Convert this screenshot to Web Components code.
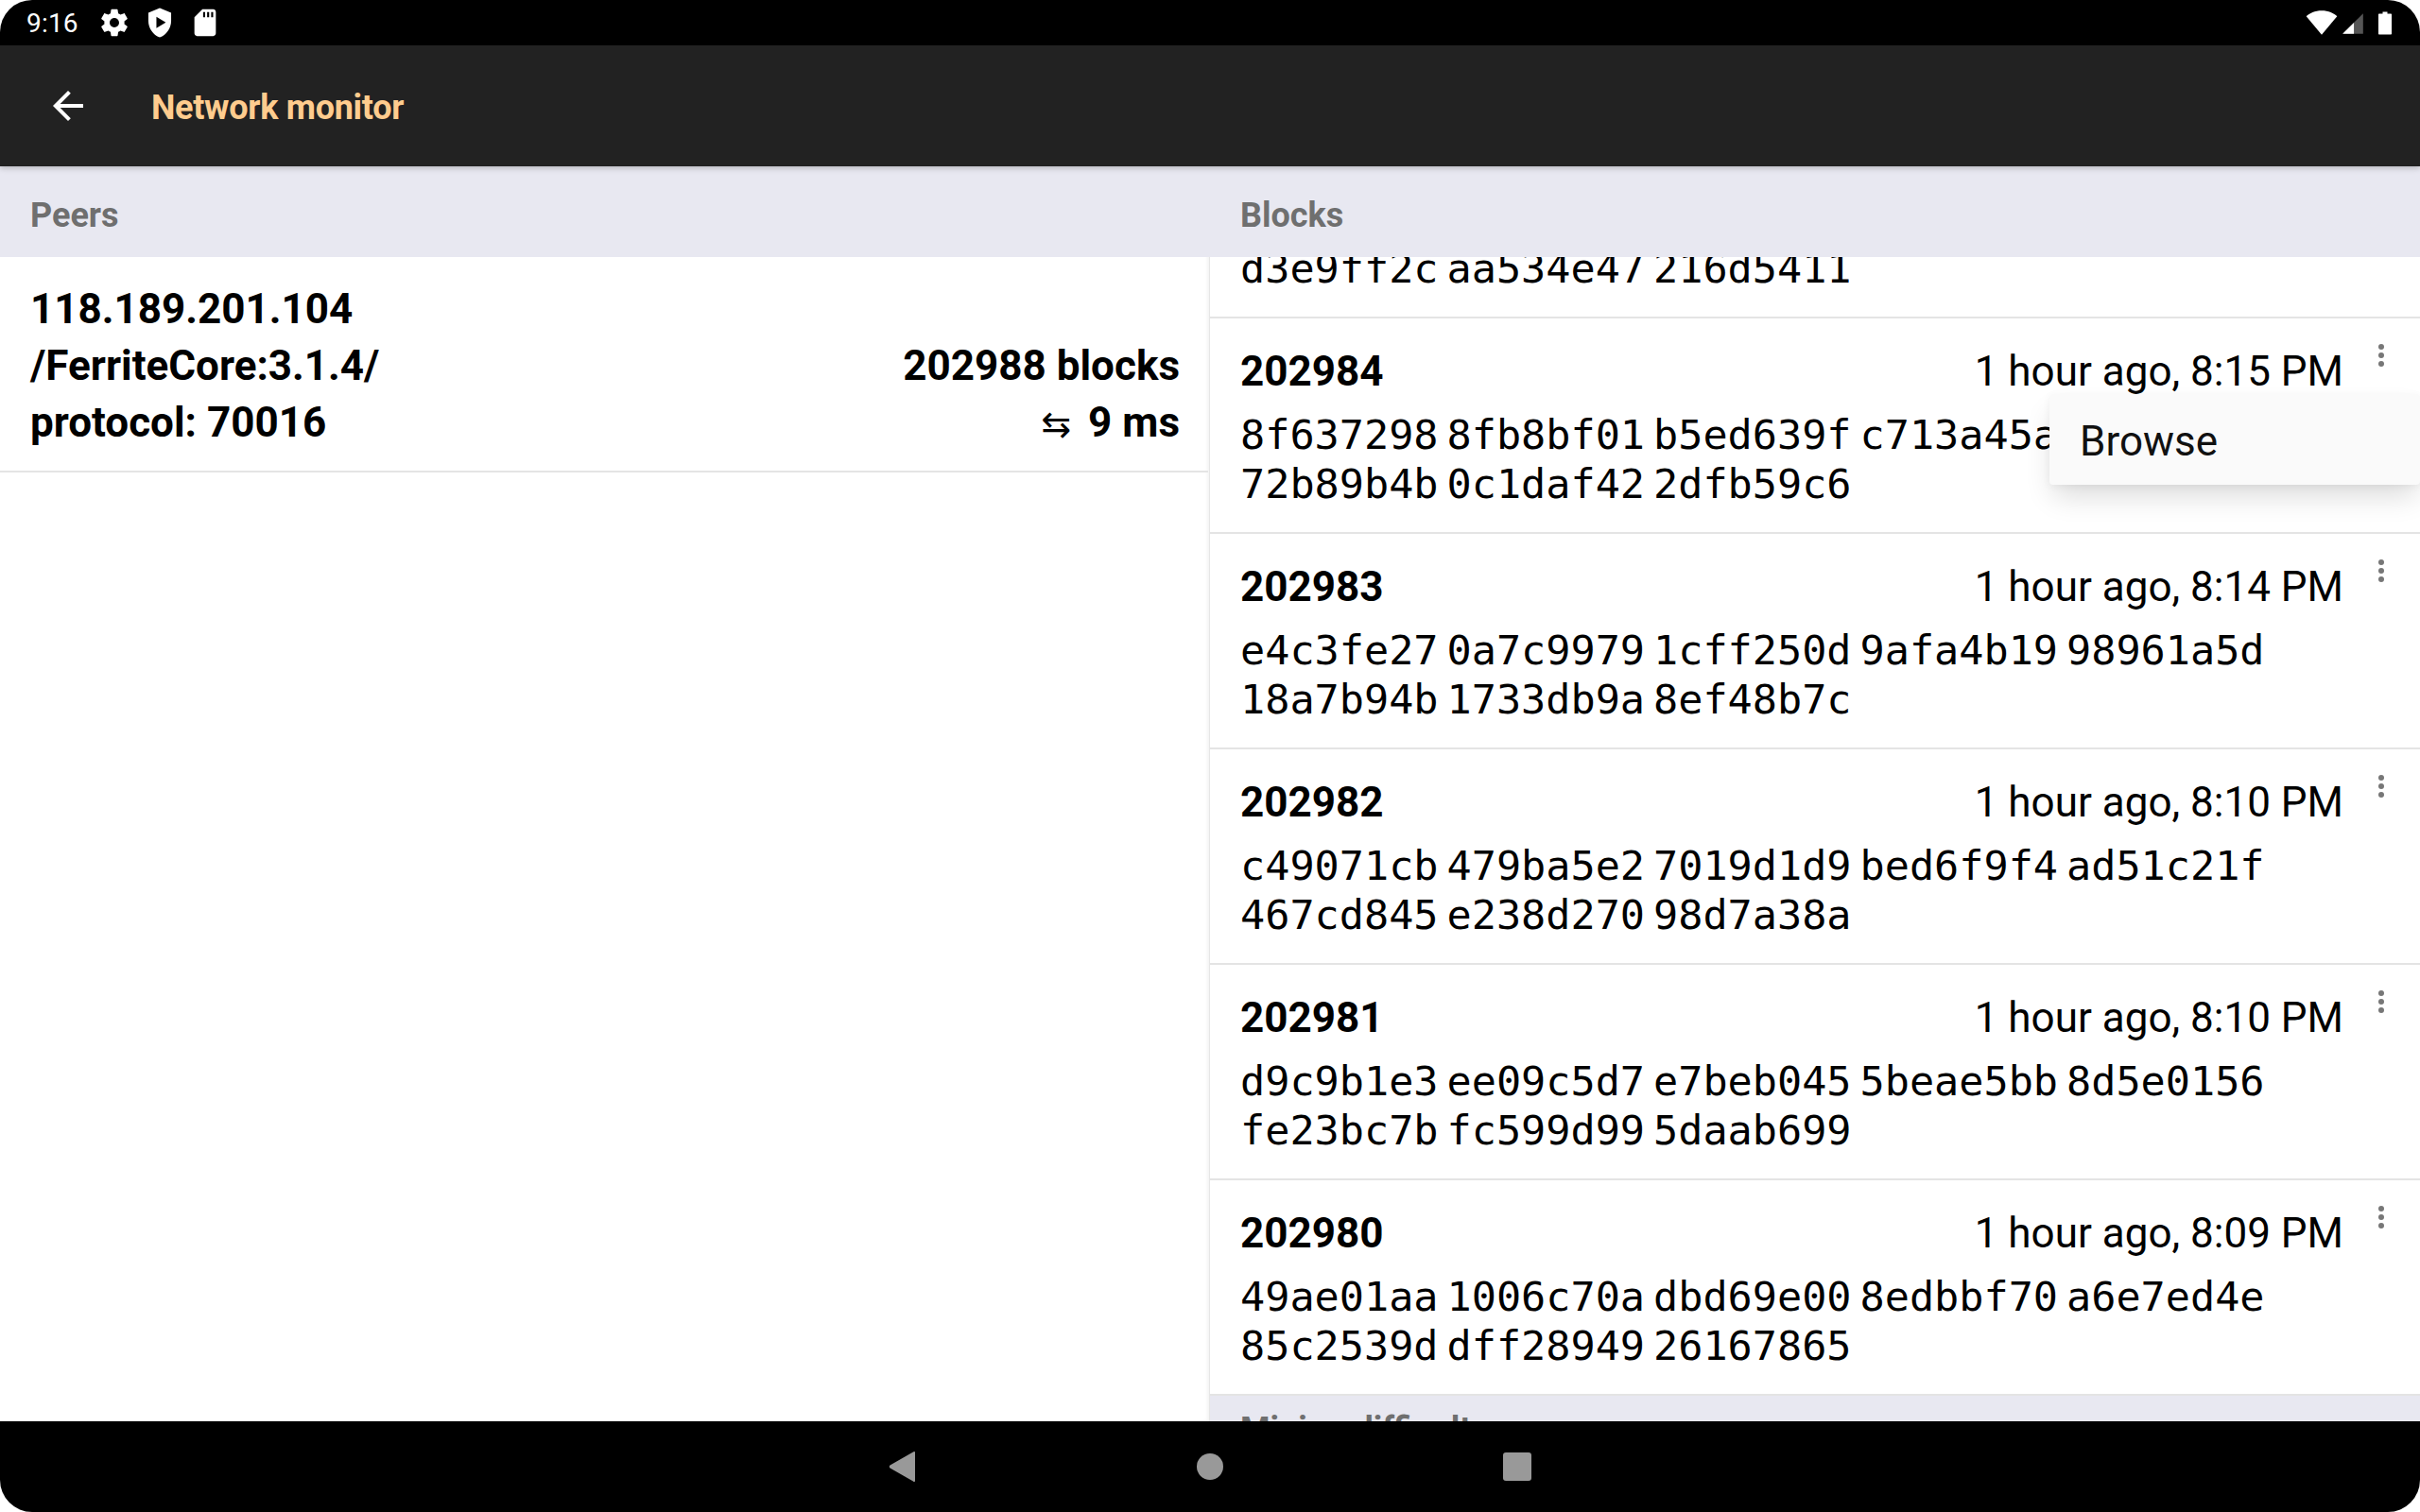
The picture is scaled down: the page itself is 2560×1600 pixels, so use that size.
<!DOCTYPE html>
<html>
<head>
<meta charset="utf-8">
<title>Network monitor</title>
<style>
    html, body { margin: 0; height: 100%; background: #fff; }
    body { font-family: Roboto, "Liberation Sans", sans-serif; color: #000; overflow: hidden; }
    #screen { width: 2560px; height: 1600px; display: flex; flex-direction: column; overflow: hidden; position: relative; }
    #panes { flex: 1; min-height: 0; display: flex; }
</style>
</head>
<body>
<div id="screen">
    <status-bar time="9:16"></status-bar>
    <app-bar>Network monitor</app-bar>
    <div id="panes">
        <list-pane title="Peers" divider>
            <peer-row>
                <span slot="host">118.189.201.104</span>
                <span slot="agent">/FerriteCore:3.1.4/</span>
                <span slot="protocol">protocol: 70016</span>
                <span slot="height">202988 blocks</span>
                <span slot="ping">9 ms</span>
            </peer-row>
        </list-pane>
        <list-pane title="Blocks" scroll="-163">
            <block-row>
                <span slot="hash">&nbsp;</span>
                <span slot="hash">d3e9ff2c aa534e47 216d5411</span>
            </block-row>
            <block-row>
                <span slot="height">202984</span>
                <span slot="time">1 hour ago, 8:15 PM</span>
                <span slot="hash">8f637298 8fb8bf01 b5ed639f c713a45a</span>
                <span slot="hash">72b89b4b 0c1daf42 2dfb59c6</span>
            </block-row>
            <block-row>
                <span slot="height">202983</span>
                <span slot="time">1 hour ago, 8:14 PM</span>
                <span slot="hash">e4c3fe27 0a7c9979 1cff250d 9afa4b19 98961a5d</span>
                <span slot="hash">18a7b94b 1733db9a 8ef48b7c</span>
            </block-row>
            <block-row>
                <span slot="height">202982</span>
                <span slot="time">1 hour ago, 8:10 PM</span>
                <span slot="hash">c49071cb 479ba5e2 7019d1d9 bed6f9f4 ad51c21f</span>
                <span slot="hash">467cd845 e238d270 98d7a38a</span>
            </block-row>
            <block-row>
                <span slot="height">202981</span>
                <span slot="time">1 hour ago, 8:10 PM</span>
                <span slot="hash">d9c9b1e3 ee09c5d7 e7beb045 5beae5bb 8d5e0156</span>
                <span slot="hash">fe23bc7b fc599d99 5daab699</span>
            </block-row>
            <block-row>
                <span slot="height">202980</span>
                <span slot="time">1 hour ago, 8:09 PM</span>
                <span slot="hash">49ae01aa 1006c70a dbd69e00 8edbbf70 a6e7ed4e</span>
                <span slot="hash">85c2539d dff28949 26167865</span>
            </block-row>
            <section-header tight>Mining difficulty</section-header>
        </list-pane>
    </div>
    <nav-bar></nav-bar>
    <popup-menu>Browse</popup-menu>
</div>

<script>
function defineEl(name, html) {
    customElements.define(name, class extends HTMLElement {
        constructor() {
            super();
            this.attachShadow({mode: 'open'});
            const template = document.createElement('template');
            template.innerHTML = html;
            this.shadowRoot.append(template.content.cloneNode(true));
        }
    });
}

class StatusBar extends HTMLElement {
    constructor() {
        super();
        this.attachShadow({mode: 'open'});
        this.shadowRoot.innerHTML = `
            <style>
                :host { display: flex; align-items: center; height: 48px; flex: none; background: #000; color: #fff;
                    border-radius: 34px 34px 0 0; padding: 0 30px 0 28px; box-sizing: border-box;
                    font: 400 28px Roboto, sans-serif; }
                svg { display: block; flex: none; fill: #fff; }
                .time { width: 62px; margin-top: 1px; letter-spacing: .2px; }
                .left { display: flex; align-items: center; gap: 14px; }
                .right { margin-left: auto; display: flex; align-items: center; }
            </style>
            <div class="left">
                <span class="time"></span>
                <svg width="34" height="34" viewBox="0 0 24 24"><path d="M19.43 12.98c.04-.32.07-.64.07-.98s-.03-.66-.07-.98l2.11-1.65c.19-.15.24-.42.12-.64l-2-3.46c-.12-.22-.39-.3-.61-.22l-2.49 1c-.52-.4-1.08-.73-1.69-.98l-.38-2.65C14.46 2.18 14.25 2 14 2h-4c-.25 0-.46.18-.49.42l-.38 2.65c-.61.25-1.17.59-1.69.98l-2.49-1c-.23-.09-.49 0-.61.22l-2 3.46c-.13.22-.07.49.12.64l2.11 1.65c-.04.32-.07.65-.07.98s.03.66.07.98l-2.11 1.65c-.19.15-.24.42-.12.64l2 3.46c.12.22.39.3.61.22l2.49-1c.52.4 1.08.73 1.69.98l.38 2.65c.03.24.24.42.49.42h4c.25 0 .46-.18.49-.42l.38-2.65c.61-.25 1.17-.59 1.69-.98l2.49 1c.23.09.49 0 .61-.22l2-3.46c.12-.22.07-.49-.12-.64l-2.11-1.65zM12 15.5c-1.93 0-3.5-1.57-3.5-3.5s1.57-3.5 3.5-3.5 3.5 1.57 3.5 3.5-1.57 3.5-3.5 3.5z"/></svg>
                <svg width="34" height="34" viewBox="0 0 24 24"><path fill-rule="evenodd" d="M12 1 3.500 4.500v6.200c0 5.400 3.600 10.400 8.500 12.300 4.900-1.900 8.500-6.900 8.500-12.300V4.500L12 1zM9.500 7.500v8.500l7-4.250-7-4.250z"/></svg>
                <svg width="34" height="34" viewBox="0 0 24 24"><path fill-rule="evenodd" d="M18 2h-8L4 8v12c0 1.100.9 2 2 2h12c1.100 0 2-.9 2-2V4c0-1.100-.9-2-2-2zM12 8h-1.500V4H12v4zm3 0h-1.500V4H15v4zm3 0h-1.500V4H18v4z"/></svg>
            </div>
            <div class="right">
                <svg width="34" height="34" viewBox="0 0 24 24"><path d="M12 21 .5 7.200C2.800 4.900 7 3 12 3s9.200 1.900 11.500 4.200L12 21z"/></svg>
                <svg width="26" height="26" viewBox="0 0 24 24" style="margin-left:3px;margin-top:2px"><path d="M22 22V2L2 22h20z" fill="#555"/><path d="M13 22V11L2 22h11z"/></svg>
                <svg width="14" height="25" viewBox="0 0 14 24" style="margin-left:14px"><path d="M4.500 0h5v2H13c.6 0 1 .4 1 1v20c0 .6-.4 1-1 1H1c-.6 0-1-.4-1-1V3c0-.6.4-1 1-1h3.500z"/></svg>
            </div>
        `;
    }
    connectedCallback() {
        this.shadowRoot.querySelector('.time').textContent = this.getAttribute('time');
    }
}
customElements.define('status-bar', StatusBar);

defineEl('app-bar', `
    <style>
        :host { display: flex; align-items: center; height: 128px; flex: none; background: #222;
            color: #ffcc8e; font: 700 36px Roboto, sans-serif; letter-spacing: -.3px; position: relative; z-index: 2;
            box-shadow: 0 2px 6px rgba(0,0,0,.22); }
        svg { width: 48px; height: 48px; margin-left: 48px; margin-right: 64px; fill: #fff; flex: none; }
        span { margin-top: 3px; }
    </style>
    <svg viewBox="0 0 24 24"><path d="M20 11H7.830l5.590-5.590L12 4l-8 8 8 8 1.410-1.410L7.830 13H20v-2z"/></svg>
    <span><slot></slot></span>
`);

defineEl('section-header', `
    <style>
        :host { display: flex; align-items: center; height: 96px; flex: none; padding: 7px 0 0 32px; box-sizing: border-box;
            background: #e8e8f1; color: #6f6f6f; font: 700 36px Roboto, sans-serif; }
        :host([tight]) { align-items: flex-start; padding-top: 15px; }
    </style>
    <slot></slot>
`);

class ListPane extends HTMLElement {
    constructor() {
        super();
        this.attachShadow({mode: 'open'});
        this.shadowRoot.innerHTML = `
            <style>
                :host { display: flex; flex-direction: column; flex: 1 1 0; min-width: 0; box-sizing: border-box; }
                :host([divider]) { box-shadow: inset -1px 0 0 #e6e6e6, inset -4px 0 4px -2px rgba(0,0,0,.07); }
                .list { flex: 1; min-height: 0; overflow: hidden; display: flex; flex-direction: column; }
                .head { position: relative; z-index: 1; }
            </style>
            <section-header class="head"></section-header>
            <div class="list"><div class="inner"><slot></slot></div></div>
        `;
    }
    connectedCallback() {
        this.shadowRoot.querySelector('.head').textContent = this.getAttribute('title');
        this.removeAttribute('title');
        const scroll = this.getAttribute('scroll');
        if (scroll) this.shadowRoot.querySelector('.inner').style.marginTop = scroll + 'px';
    }
}
customElements.define('list-pane', ListPane);

defineEl('peer-row', `
    <style>
        :host { display: grid; grid-template-columns: 1fr auto; grid-auto-rows: 60px; height: 228px; box-sizing: border-box;
            padding: 4px 30px 0 32px; margin-right: 2px; border-bottom: 2px solid #e4e4e4; align-content: center;
            font: 700 44px Roboto, sans-serif; line-height: 60px; }
        .r { text-align: right; }
        .ping { text-align: right; }
        .arrows { font-family: "DejaVu Sans", sans-serif; font-weight: 400; font-size: 38px; margin-right: 18px; }
    </style>
    <div style="grid-column: 1 / 3"><slot name="host"></slot></div>
    <div><slot name="agent"></slot></div>
    <div class="r"><slot name="height"></slot></div>
    <div><slot name="protocol"></slot></div>
    <div class="ping"><span class="arrows">⇆</span><slot name="ping"></slot></div>
`);

defineEl('block-row', `
    <style>
        :host { display: block; height: 228px; box-sizing: border-box; padding: 26px 32px 0 32px; border-bottom: 2px solid #e4e4e4;
            position: relative; font: 400 44px Roboto, sans-serif; }
        .top { display: flex; justify-content: space-between; height: 60px; line-height: 60px; padding-right: 49px; }
        .num { font-weight: 700; min-height: 60px; }
        .hash { margin-top: 11px; font-family: "DejaVu Sans Mono", monospace;
            font-size: 43.5px; word-spacing: -17.2px; white-space: nowrap; }
        ::slotted([slot=hash]) { display: block; height: 52px; line-height: 52px; }
        .more { position: absolute; top: 26px; right: 38px; width: 6px; height: 26px; }
        svg { display: block; fill: #777; }
        :host(:not(:has([slot=height]))) .more { display: none; }
    </style>
    <div class="top">
        <span class="num"><slot name="height"></slot></span>
        <span><slot name="time"></slot></span>
    </div>
    <div class="hash"><slot name="hash"></slot></div>
    <div class="more">
        <svg width="6" height="26" viewBox="0 0 6 26"><circle cx="3" cy="4" r="3"/><circle cx="3" cy="13" r="3"/><circle cx="3" cy="22" r="3"/></svg>
    </div>
`);

defineEl('popup-menu', `
    <style>
        :host { position: absolute; left: 2168px; right: 0; top: 417px; height: 96px; box-sizing: border-box; display: flex; align-items: center;
            padding: 4px 0 0 32px; background: #fafafa; border-radius: 4px; z-index: 5;
            font: 400 44px Roboto, sans-serif; color: #111;
            box-shadow: 0 16px 28px -4px rgba(0,0,0,.14), 0 2px 8px rgba(0,0,0,.05); }
    </style>
    <slot></slot>
`);

defineEl('nav-bar', `
    <style>
        :host { display: flex; height: 96px; flex: none; background: #000; align-items: center; justify-content: center; gap: 293px;
            border-radius: 0 0 34px 34px; }
        svg { display: block; fill: #999; flex: none; }
    </style>
    <svg width="32" height="36" viewBox="0 0 32 36"><path d="M27 2.500c1-1 2-.5 2 .5v30c0 1-1 1.500-2 .5L2.500 19.500c-1-1-1-2 0-3L27 2.500z"/></svg>
    <svg width="32" height="32" viewBox="0 0 32 32"><circle cx="16" cy="16" r="14"/></svg>
    <svg width="32" height="32" viewBox="0 0 32 32"><rect x="1" y="1" width="30" height="30" rx="3"/></svg>
`);
</script>
</body>
</html>
